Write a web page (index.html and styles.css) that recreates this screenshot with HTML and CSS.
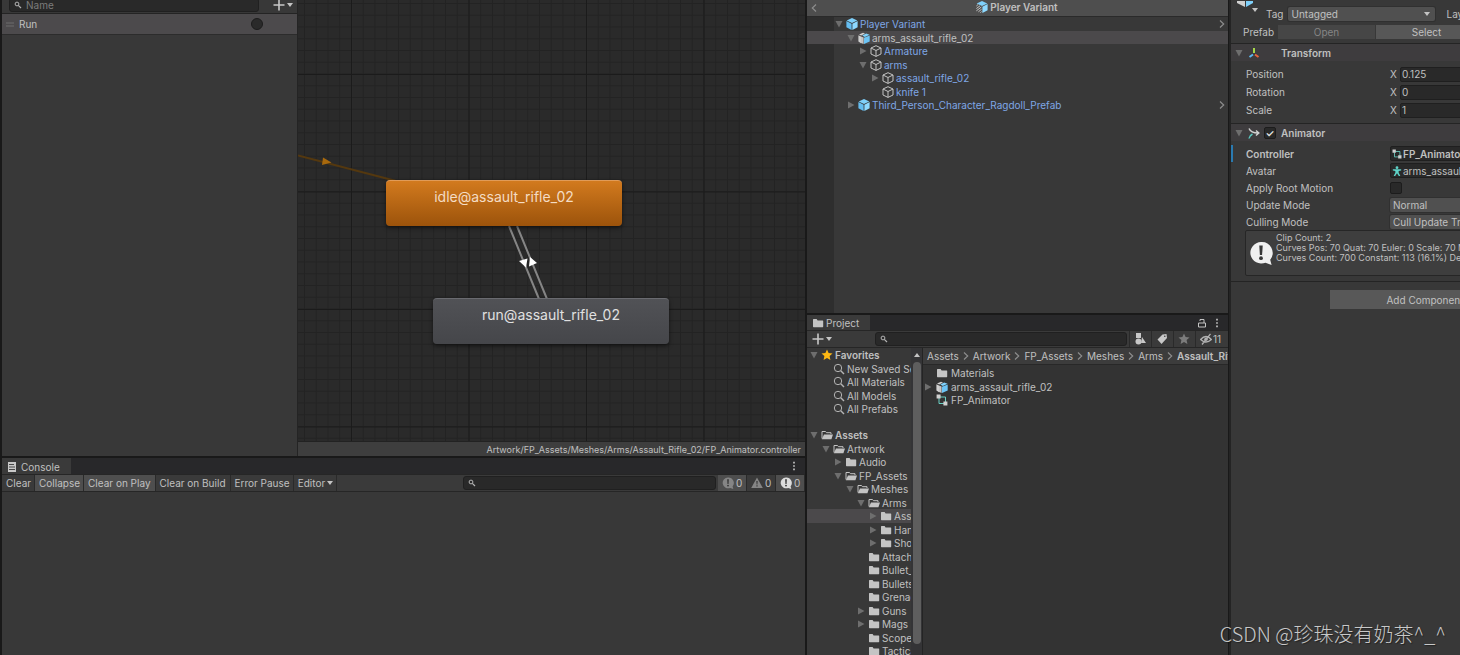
FILE: index.html
```html
<!DOCTYPE html>
<html lang="en">
<head>
<meta charset="utf-8">
<title>Animator</title>
<link rel="stylesheet" href="styles.css">
</head>
<body>
<svg class="defs" aria-hidden="true">
  <symbol id="i-cube" viewBox="0 0 12 12"><path fill="#7fd0fa" d="M6 0 11.3 2.4 6 5 .7 2.4Z"/><path fill="#64bdf0" d="M.4 3.1 5.6 5.7V12L.4 9.2Z"/><path fill="#8ed9ff" d="M11.6 3.1 6.4 5.7V12l5.2-2.8Z"/></symbol>
  <symbol id="i-variant" viewBox="0 0 12 12"><path fill="#7fd0fa" d="M6 0 11.3 2.4 6 5 .7 2.4Z"/><path stroke="#c4c4c4" d="M.4 5 2.2 3.4M.4 7.5 4 4.8M.4 9.8 5.4 6M2.4 10.8 5.6 8.2M4.4 11.6 5.6 10.6"/><path fill="#8ed9ff" d="M11.6 3.1 6.4 5.7V12l5.2-2.8Z"/></symbol>
  <symbol id="i-model" viewBox="0 0 12 12"><path fill="#d0d0d0" d="M.4 3.3 3 4.4v6.8L.4 9.4ZM1 2.6 5 .8l2 .8L3.2 3.5Z"/><path fill="#c4c4c4" d="m3 4.600 2.600 1V12L3 11Z"/><path fill="#7fd0fa" d="m4.2 3.600 4-2 3.400 1.200-4.800 2.200Z"/><path fill="#6cc4f5" d="m6 5.800 5.700-2.300v6.100L6 12Z"/></symbol>
  <symbol id="i-object" viewBox="0 0 12 12"><path fill="none" stroke="#c4c4c4" stroke-linejoin="round" d="M6 .7 11 3v6L6 11.4 1 9V3ZM1 3l5 2.5L11 3M6 5.5v5.9"/></symbol>
  <symbol id="i-folder" viewBox="0 0 12 12"><path fill="#c4c4c4" d="M1 2.6Q1 2 1.6 2h3l1 1.4h5q.6 0 .6.6v5.6q0 .6-.6.6h-9Q1 10.200 1 9.600Z"/></symbol>
  <symbol id="i-open" viewBox="0 0 12 12"><path fill="none" stroke="#c4c4c4" d="M1 9.500V2.500h3.500l1 1.200h4.500v1.300"/><path fill="#c4c4c4" d="M3 5.500h9L10.400 10.200H.8Z"/></symbol>
  <symbol id="i-search" viewBox="0 0 12 12"><circle cx="5" cy="5" r="3.700" fill="none" stroke="#b4b4b4"/><path stroke="#b4b4b4" stroke-width="1.400" d="m7.800 7.800 3.200 3.200"/></symbol>
  <symbol id="i-lens" viewBox="0 0 8 8"><circle cx="3" cy="3" r="1.900" fill="none" stroke="#b4b4b4"/><path stroke="#b4b4b4" stroke-width="1.200" d="m4.300 4.300 2.700 2.700"/></symbol>
  <symbol id="i-star" viewBox="0 0 12 12"><path d="m6 .6 1.600 3.500 3.900.4-2.900 2.600.8 3.900L6 9.100 2.600 11l.8-3.900L.5 4.500l3.900-.4Z"/></symbol>
  <symbol id="i-down" viewBox="0 0 10 10"><path d="M1.500 2h7L5 8.500Z"/></symbol>
  <symbol id="i-right" viewBox="0 0 10 10"><path d="M2 1.500v7L8.500 5Z"/></symbol>
  <symbol id="i-caret" viewBox="0 0 6 4"><path fill="#c4c4c4" d="M0 0h6L3 4Z"/></symbol>
  <symbol id="i-plus" viewBox="0 0 12 12"><path stroke="#c8c8c8" stroke-width="1.600" d="M6 .5v11M.5 6h11"/></symbol>
  <symbol id="i-next" viewBox="0 0 6 10"><path fill="none" stroke="currentColor" stroke-width="1.200" d="m1 1.500 3.700 3.500L1 8.500"/></symbol>
  <symbol id="i-dots" viewBox="0 0 4 12"><path fill="#c4c4c4" d="M1 1h2v2H1zM1 5h2v2H1zM1 9h2v2H1z"/></symbol>
  <symbol id="i-ctrl" viewBox="0 0 12 12"><path fill="none" stroke="#6ad0c4" d="M4 3h5.500v5M3 4v5.500h5"/><path fill="#d0d0d0" d="M.6.6h4v4h-4zM7.400 7.400h4v4h-4z"/></symbol>
  <symbol id="i-bubble" viewBox="0 0 24 24"><path fill="currentColor" d="M12 1a11 10.800 0 1 0 4.500 20.800L22.600 24l-1.400-5.300A10.900 10.900 0 0 0 12 1Z"/><path fill="#383838" d="M10.300 4.500h3.400l-.6 9.500h-2.200z"/><circle cx="12" cy="17.200" r="1.900" fill="#383838"/></symbol>
</svg>

<main class="editor">
  <div class="column column-left">
    <section class="animator">
      <div class="params">
        <div class="params-bar">
          <label class="search"><svg class="s8"><use href="#i-lens"/></svg><input type="text" placeholder="Name" aria-label="Parameter name"></label>
          <button class="add" aria-label="Add parameter"><svg class="s12"><use href="#i-plus"/></svg><svg class="caret"><use href="#i-caret"/></svg></button>
        </div>
        <div class="param"><svg class="grip" viewBox="0 0 8 5"><path stroke="#6c6c6c" d="M0 1h8M0 4h8"/></svg><label for="run">Run</label><input id="run" type="radio"></div>
      </div>
      <div class="graph">
        <div class="canvas">
          <svg class="wires">
            <defs>
              <pattern id="minor" x="6" y="3" width="11.75" height="11.75" patternUnits="userSpaceOnUse"><path stroke="#232323" fill="none" d="M.5 0v11.750M0 .5h11.750"/></pattern>
              <pattern id="major" x="53" y="74" width="117.500" height="117.500" patternUnits="userSpaceOnUse"><path stroke="#1b1b1b" fill="none" d="M.5 0v117.500M0 .5h117.500"/></pattern>
            </defs>
            <rect width="100%" height="100%" fill="url(#minor)"/>
            <rect width="100%" height="100%" fill="url(#major)"/>
            <path stroke="#54380f" stroke-width="2" d="M0 155.500 100 181.500"/>
            <path fill="#a8690d" d="m24 165 1-7.500 8.500 5z"/>
            <path stroke="#858585" stroke-width="2" d="m211 226 30 73M219 226l30 73"/>
            <path fill="#fff" d="m221 261 8.500-2.500L228 267.500zM231 266.500l1-9.500 7 6z"/>
          </svg>
          <button class="node idle">idle@assault_rifle_02</button>
          <button class="node run">run@assault_rifle_02</button>
        </div>
        <div class="path">Artwork/FP_Assets/Meshes/Arms/Assault_Rifle_02/FP_Animator.controller</div>
      </div>
    </section>

    <section class="console">
      <div class="tabs">
        <div class="tab"><svg class="doc" viewBox="0 0 10 10"><path fill="#c8c8c8" d="M1 0h8v10H1z"/><path stroke="#484848" d="M2 2.500h5M2 5h6M2 7.500h6"/></svg>Console</div>
        <button class="more" aria-label="Console menu"><svg class="dots"><use href="#i-dots"/></svg></button>
      </div>
      <div class="toolbar">
        <button>Clear</button><button class="on">Collapse</button><button class="on wide">Clear on Play</button><button class="wide">Clear on Build</button><button>Error Pause</button><button>Editor<svg class="caret"><use href="#i-caret"/></svg></button>
        <label class="search"><svg class="s8"><use href="#i-lens"/></svg><input type="text" aria-label="Search console"></label>
        <button class="count on dim"><svg class="s12"><use href="#i-bubble"/></svg>0</button>
        <button class="count dim"><svg class="s12" viewBox="0 0 12 12"><path fill="currentColor" d="M6 .5 11.800 11H.2Z"/><path fill="#383838" d="M5.300 4h1.400l-.3 3.600h-.8zM5.400 8.300h1.200v1.200H5.400z"/></svg>0</button>
        <button class="count on"><svg class="s12"><use href="#i-bubble"/></svg>0</button>
      </div>
    </section>
  </div>

  <div class="column column-mid">
    <section class="hierarchy">
      <header><button aria-label="Back"><svg class="next back"><use href="#i-next"/></svg></button><h2><svg class="s12"><use href="#i-variant"/></svg>Player Variant</h2></header>
      <ul class="tree">
        <li class="l0"><svg class="arrow"><use href="#i-down"/></svg><svg class="s12"><use href="#i-cube"/></svg><a href="#">Player Variant</a><svg class="next"><use href="#i-next"/></svg></li>
        <li class="l1 selected"><svg class="arrow"><use href="#i-down"/></svg><svg class="s12"><use href="#i-model"/></svg><span>arms_assault_rifle_02</span></li>
        <li class="l2"><svg class="arrow"><use href="#i-right"/></svg><svg class="s12"><use href="#i-object"/></svg><a href="#">Armature</a></li>
        <li class="l2"><svg class="arrow"><use href="#i-down"/></svg><svg class="s12"><use href="#i-object"/></svg><a href="#">arms</a></li>
        <li class="l3"><svg class="arrow"><use href="#i-right"/></svg><svg class="s12"><use href="#i-object"/></svg><a href="#">assault_rifle_02</a></li>
        <li class="l3"><svg class="arrow"></svg><svg class="s12"><use href="#i-object"/></svg><a href="#">knife 1</a></li>
        <li class="l1"><svg class="arrow"><use href="#i-right"/></svg><svg class="s12"><use href="#i-cube"/></svg><a href="#">Third_Person_Character_Ragdoll_Prefab</a><svg class="next"><use href="#i-next"/></svg></li>
      </ul>
    </section>

    <section class="project">
      <div class="tabs">
        <div class="tab"><svg class="s12"><use href="#i-folder"/></svg>Project</div>
        <button class="more" aria-label="Lock"><svg class="lock" viewBox="0 0 8 10"><path fill="none" stroke="#c4c4c4" d="M.5 5h7v4h-7zM2 3V1.500h4V5"/></svg></button>
        <button class="more" aria-label="Project menu"><svg class="dots"><use href="#i-dots"/></svg></button>
      </div>
      <div class="toolbar">
        <button class="add" aria-label="Create"><svg class="s12"><use href="#i-plus"/></svg><svg class="caret"><use href="#i-caret"/></svg></button>
        <label class="search"><svg class="s8"><use href="#i-lens"/></svg><input type="text" aria-label="Search project"></label>
        <button class="filter" aria-label="Search by type"><svg class="s12" viewBox="0 0 12 12"><path fill="#c8c8c8" d="M2 0h5v5H2zM8 4l4 6H7z"/><circle cx="4.500" cy="8.500" r="3" fill="#c8c8c8"/></svg></button>
        <button class="filter" aria-label="Search by label"><svg class="s12" viewBox="0 0 12 12"><path fill="#c8c8c8" d="m1.500 6.500 5-5 4-.5.500 4-5.500 6Z"/><circle cx="8.800" cy="3.200" r=".8" fill="#383838"/></svg></button>
        <button class="filter" aria-label="Save search"><svg class="s12 grey"><use href="#i-star"/></svg></button>
        <button class="hidden-count"><svg class="s12" viewBox="0 0 12 12"><path fill="none" stroke="#b0b0b0" stroke-width="1.300" d="M.6 6.500Q6 .5 11.400 6.500 6 11.500.6 6.500ZM2 11.500 10.500.8"/><circle cx="6" cy="6.200" r="1.700" fill="#b0b0b0"/></svg>11</button>
      </div>
      <div class="browser">
        <ul class="tree folders">
          <li class="l0"><svg class="arrow"><use href="#i-down"/></svg><svg class="s12 gold"><use href="#i-star"/></svg><b>Favorites</b></li>
          <li class="l1 leaf"><svg class="s12"><use href="#i-search"/></svg><span>New Saved Search</span></li>
          <li class="l1 leaf"><svg class="s12"><use href="#i-search"/></svg><span>All Materials</span></li>
          <li class="l1 leaf"><svg class="s12"><use href="#i-search"/></svg><span>All Models</span></li>
          <li class="l1 leaf"><svg class="s12"><use href="#i-search"/></svg><span>All Prefabs</span></li>
          <li class="spacer"></li>
          <li class="l0"><svg class="arrow"><use href="#i-down"/></svg><svg class="s12"><use href="#i-open"/></svg><b>Assets</b></li>
          <li class="l1"><svg class="arrow"><use href="#i-down"/></svg><svg class="s12"><use href="#i-open"/></svg><span>Artwork</span></li>
          <li class="l2"><svg class="arrow"><use href="#i-right"/></svg><svg class="s12"><use href="#i-folder"/></svg><span>Audio</span></li>
          <li class="l2"><svg class="arrow"><use href="#i-down"/></svg><svg class="s12"><use href="#i-open"/></svg><span>FP_Assets</span></li>
          <li class="l3"><svg class="arrow"><use href="#i-down"/></svg><svg class="s12"><use href="#i-open"/></svg><span>Meshes</span></li>
          <li class="l4"><svg class="arrow"><use href="#i-down"/></svg><svg class="s12"><use href="#i-open"/></svg><span>Arms</span></li>
          <li class="l5 selected"><svg class="arrow"><use href="#i-right"/></svg><svg class="s12"><use href="#i-folder"/></svg><span>Assault_Rifle_02</span></li>
          <li class="l5"><svg class="arrow"><use href="#i-right"/></svg><svg class="s12"><use href="#i-folder"/></svg><span>Handgun</span></li>
          <li class="l5"><svg class="arrow"><use href="#i-right"/></svg><svg class="s12"><use href="#i-folder"/></svg><span>Shotgun</span></li>
          <li class="l4 leaf"><svg class="s12"><use href="#i-folder"/></svg><span>Attachments</span></li>
          <li class="l4 leaf"><svg class="s12"><use href="#i-folder"/></svg><span>Bullet_Casings</span></li>
          <li class="l4 leaf"><svg class="s12"><use href="#i-folder"/></svg><span>Bullets</span></li>
          <li class="l4 leaf"><svg class="s12"><use href="#i-folder"/></svg><span>Grenades</span></li>
          <li class="l4"><svg class="arrow"><use href="#i-right"/></svg><svg class="s12"><use href="#i-folder"/></svg><span>Guns</span></li>
          <li class="l4"><svg class="arrow"><use href="#i-right"/></svg><svg class="s12"><use href="#i-folder"/></svg><span>Mags</span></li>
          <li class="l4 leaf"><svg class="s12"><use href="#i-folder"/></svg><span>Scopes</span></li>
          <li class="l4 leaf"><svg class="s12"><use href="#i-folder"/></svg><span>Tactical</span></li>
        </ul>
        <div class="scrollbar"><svg class="caret up"><use href="#i-caret"/></svg><div class="thumb"></div></div>
        <div class="files">
          <nav class="crumbs"><a href="#">Assets</a><svg class="next"><use href="#i-next"/></svg><a href="#">Artwork</a><svg class="next"><use href="#i-next"/></svg><a href="#">FP_Assets</a><svg class="next"><use href="#i-next"/></svg><a href="#">Meshes</a><svg class="next"><use href="#i-next"/></svg><a href="#">Arms</a><svg class="next"><use href="#i-next"/></svg><b>Assault_Rifle_02</b></nav>
          <ul class="tree">
            <li><svg class="arrow"></svg><svg class="s12"><use href="#i-folder"/></svg><span>Materials</span></li>
            <li><svg class="arrow"><use href="#i-right"/></svg><svg class="s12"><use href="#i-model"/></svg><span>arms_assault_rifle_02</span></li>
            <li><svg class="arrow"></svg><svg class="s12"><use href="#i-ctrl"/></svg><span>FP_Animator</span></li>
          </ul>
        </div>
      </div>
    </section>
  </div>

  <aside class="inspector">
    <div class="sheet">
      <div class="object">
        <div class="tag-row">
          <div class="object-icon"><svg class="big-cube" viewBox="0 0 18 6"><path fill="#d0d0d0" d="M0 0h8v6L0 2z"/><path fill="#7fd0fa" d="M9 0h7v2L9 6z"/></svg><svg class="caret"><use href="#i-caret"/></svg></div>
          <label for="tag">Tag</label>
          <div class="picker"><select id="tag"><option>Untagged</option></select><svg class="caret"><use href="#i-caret"/></svg></div>
          <label for="layer">Layer</label><select id="layer" class="layer"><option></option></select>
        </div>
        <div class="prefab-row"><span>Prefab</span><button disabled>Open</button><button>Select</button></div>
      </div>
      <div class="component">
        <h3><svg class="arrow"><use href="#i-down"/></svg><svg class="s12" viewBox="0 0 12 12"><path stroke="#a6d84a" stroke-width="2" d="M6 1v5"/><path stroke="#5cb8f0" stroke-width="2" d="M5 7.500 1.500 10"/><path stroke="#e8643c" stroke-width="2" d="m7 7.500 3.500 2.500"/></svg><span class="no-toggle"></span>Transform</h3>
        <div class="fields">
          <div class="field"><label for="px">Position</label><i>X</i><input id="px" type="text" value="0.125"></div>
          <div class="field"><label for="rx">Rotation</label><i>X</i><input id="rx" type="text" value="0"></div>
          <div class="field"><label for="sx">Scale</label><i>X</i><input id="sx" type="text" value="1"></div>
        </div>
      </div>
      <div class="component">
        <h3><svg class="arrow"><use href="#i-down"/></svg><svg class="s12" viewBox="0 0 12 12"><path fill="none" stroke="#d0d0d0" stroke-width="1.500" d="M1 1.500Q3 6 10 6M8 3.500 10.800 6 8 8.500"/><path stroke="#5ac8c0" stroke-width="1.500" d="M1 11.500Q1.500 8.500 4.500 7" fill="none"/></svg><input type="checkbox" checked aria-label="Animator enabled"><span>Animator</span></h3>
        <div class="fields animator-fields">
          <div class="field changed"><label for="ctl">Controller</label><button id="ctl" class="ref"><svg class="s10"><use href="#i-ctrl"/></svg>FP_Animator</button></div>
          <div class="field"><label for="ava">Avatar</label><button id="ava" class="ref"><svg class="s10" viewBox="0 0 12 12"><circle cx="6" cy="2" r="1.700" fill="#5fd3c8"/><path fill="#5fd3c8" d="M1 4h10v1.300L8 6v2l2 4H8.200L6 8.800 3.800 12H2l2-4V6L1 5.300z"/></svg>arms_assault_rifle_02Avatar</button></div>
          <div class="field"><label for="arm">Apply Root Motion</label><input id="arm" type="checkbox"></div>
          <div class="field"><label for="upd">Update Mode</label><select id="upd"><option>Normal</option></select></div>
          <div class="field"><label for="cul">Culling Mode</label><select id="cul"><option>Cull Update Transforms</option></select></div>
        </div>
        <div class="info"><svg class="s24"><use href="#i-bubble"/></svg><p>Clip Count: 2<br>Curves Pos: 70 Quat: 70 Euler: 0 Scale: 70 Muscles: 0<br>Curves Count: 700 Constant: 113 (16.1%) Dense: 587</p></div>
      </div>
      <div class="footer"><button class="add-component">Add Component</button></div>
    </div>
  </aside>
</main>
<div class="watermark" lang="zh">CSDN @珍珠没有奶茶^_^</div>
</body>
</html>
```
FILE: styles.css
```css
* { box-sizing: border-box; }
body { margin: 0; background: #191919; color: #c0c0c0; font: 10px/14px Inter, "Noto Sans", sans-serif; overflow: hidden; }
button, input, select { font: inherit; color: inherit; margin: 0; padding: 0; border: 0; background: none; min-width: 0; }
button { white-space: nowrap; }
ul { list-style: none; margin: 0; padding: 0; }
a { color: inherit; text-decoration: none; }
h2, h3, p { margin: 0; font-size: inherit; }
svg { flex: none; display: block; }
b { font-weight: 600; }
.defs { position: absolute; width: 0; height: 0; }
.s8 { width: 8px; height: 8px; }
.s10 { width: 10px; height: 10px; }
.s12 { width: 12px; height: 12px; }
.s24 { width: 24px; height: 24px; }
.arrow { width: 10px; height: 10px; fill: #6e6e6e; }
.caret { width: 6px; height: 4px; }
.dots { width: 4px; height: 10px; }
.next { width: 6px; height: 10px; color: #8c8c8c; }
.back { transform: rotate(180deg); }
.gold { fill: #fdb813; }
.grey { fill: #7c7c7c; }

.editor { display: grid; grid-template-columns: 805fr 424fr 231fr; height: 100vh; }
.column { display: grid; min-width: 0; min-height: 0; gap: 2px; }
.column-left { grid-template-rows: 456fr 197fr; padding-left: 2px; }
.column-mid { grid-template-rows: 313fr 340fr; padding: 0 1px 0 2px; }
section { min-width: 0; min-height: 0; overflow: hidden; background: #383838; }

.search { display: flex; align-items: center; gap: 4px; height: 14px; padding-left: 4px; background: #292929; border: 1px solid #202020; border-radius: 3px; }
.search input { flex: 1; outline: 0; }
.search input::placeholder { color: #7c7c7c; }
.add { display: flex; align-items: center; gap: 2px; }
.tabs { display: flex; align-items: stretch; height: 16px; background: #28282a; }
.tab { display: flex; align-items: center; gap: 2px; padding: 1px 11px 0 5px; margin-right: auto; background: #3a3a3a; }
.more { padding: 0 5px 0 4px; }
.more:last-child { padding-right: 9px; }
.toolbar { display: flex; align-items: stretch; height: 18px; border-bottom: 1px solid #262626; border-top: 1px solid #262626; background: #3a3a3a; }

.animator { display: flex; }
.params { width: 296px; border-right: 1px solid #242424; }
.params-bar { display: flex; align-items: center; height: 14px; padding: 0 4px 4px 7px; border-bottom: 1px solid #242424; }
.params-bar .search { flex: 1; margin-right: 14px; }
.param { display: flex; align-items: center; height: 21px; padding: 0 34px 0 4px; background: #4c4a4c; border-bottom: 1px solid #2c2c2c; }
.grip { width: 8px; height: 5px; }
.param label { margin: 0 auto 0 5px; }
.param input { appearance: none; width: 12px; height: 12px; border: 1px solid #1c1c1c; border-radius: 50%; background: #2a2a2a; }
.graph { flex: 1; min-width: 0; display: flex; flex-direction: column; }
.canvas { position: relative; flex: 1; overflow: hidden; background: #2a2a2a; }
.wires { position: absolute; inset: 0; width: 100%; height: 100%; }
.node { position: absolute; width: 236px; height: 46px; padding-bottom: 13px; border-radius: 4px; font-size: 14px; box-shadow: 0 2px 4px #0008; }
.idle { left: 88px; top: 180px; color: #f4dcc4; background: linear-gradient(#d27a1e, #9c530b); border-top: 1px solid #e09b58; }
.run { left: 135px; top: 298px; color: #e0e0e0; background: linear-gradient(#515256, #45464a); border-top: 1px solid #6a6b70; }
.path { height: 15px; padding-right: 4px; border-top: 1px solid #222; background: #3e3e3e; text-align: right; font-size: 9px; line-height: 15px; }

.doc { width: 10px; height: 10px; margin-right: 2px; }
.console .toolbar button { padding: 0 3px 0 4px; border-right: 1px solid #2a2a2a; display: flex; align-items: center; gap: 2px; }
.console .toolbar .wide { padding-right: 4px; }
.console .toolbar .count { min-width: 29px; }
.toolbar .on { background: #4e4e4e; }
.toolbar .search { flex: 1; max-width: 253px; margin: 1px 2px 0 auto; }
.count svg { color: #dcdcdc; }
.dim svg { color: #858585; }

.hierarchy header { display: flex; height: 17px; padding: 0 11px 0 4px; background: #4e4e4e; border-bottom: 1px solid #2a2a2a; }
.hierarchy h2 { flex: 1; display: flex; align-items: center; justify-content: center; gap: 2px; padding-bottom: 2px; font-weight: 600; }
.hierarchy { background: linear-gradient(90deg, #2e2e2e 27px, #383838 27px); }
.tree li { display: flex; align-items: center; gap: 2px; height: 14px; white-space: nowrap; }
.tree li:nth-child(even) { height: 13px; }
.tree .selected { background: #4b494b; }
.hierarchy li { padding-right: 3px; }
.hierarchy .tree a { color: #7fa7e6; }
.hierarchy .tree .next { margin-left: auto; }
.hierarchy .l0 { padding-left: 27px; }
.hierarchy .l1 { padding-left: 39px; }
.hierarchy .l2 { padding-left: 51px; }
.hierarchy .l3 { padding-left: 63px; }

.project { display: flex; flex-direction: column; }
.project .tabs { height: 15px; }
.project .toolbar { padding-left: 5px; }
.project .toolbar .search { max-width: none; margin-left: 43px; }
.filter { width: 22px; padding-left: 4px; border-left: 1px solid #2a2a2a; }
.hidden-count { width: 33px; display: flex; align-items: center; gap: 1px; padding-left: 4px; border-left: 1px solid #2a2a2a; }
.lock { width: 8px; height: 10px; }
.browser { flex: 1; min-height: 0; display: flex; }
.folders { width: 104px; overflow: hidden; }
.folders li.spacer:nth-child(even) { height: 12px; }
.folders .l0 { padding-left: 2px; }
.folders .l1 { padding-left: 14px; }
.folders .l2 { padding-left: 26px; }
.folders .l3 { padding-left: 38px; }
.folders .l4 { padding-left: 49px; }
.folders .l5 { padding-left: 61px; }
.folders .leaf .s12 { margin-left: 12px; }
.scrollbar { width: 12px; padding: 5px 2px 11px; display: flex; flex-direction: column; align-items: center; gap: 5px; border-right: 1px solid #242424; background: #343436; }
.up { transform: rotate(180deg); }
.thumb { flex: 1; width: 8px; border-radius: 4px; background: #5e5e5e; }
.files { flex: 1; min-width: 0; background: #333; }
.crumbs { display: flex; align-items: center; gap: 4px; height: 17px; padding-left: 4px; overflow: hidden; white-space: nowrap; background: #3c3c3c; border-bottom: 1px solid #282828; }
.files .tree { padding-top: 1px; }
.files .tree li { gap: 3px; }

.inspector { min-width: 0; overflow: hidden; background: #383838; border-left: 2px solid #242424; }
.sheet { min-width: 388px; }
select { appearance: none; height: 14px; padding: 0 3px; border-radius: 2px; background: #505050; box-shadow: 0 0 0 1px #303030; line-height: 14px; }
.object { border-bottom: 1px solid #242424; }
.tag-row { display: flex; align-items: center; height: 23px; padding: 5px 0 0 6px; }
.object-icon { width: 29px; height: 18px; display: flex; flex-direction: column; gap: 1px; margin-top: -9px; }
.object-icon .caret { margin-left: 15px; }
.big-cube { width: 18px; height: 6px; }
.picker { position: relative; width: 147px; margin: 0 11px 0 5px; display: flex; }
.picker select { flex: 1; }
.picker .caret { position: absolute; right: 5px; top: 5px; }
.layer { flex: 1; margin-left: 5px; }
.prefab-row { display: flex; align-items: center; height: 20px; padding: 0 0 2px 12px; }
.prefab-row span { width: 35px; }
.prefab-row button { width: 97px; height: 14px; margin-right: 1px; background: #575757; }
.prefab-row button:last-child { width: 101px; }
.prefab-row button:disabled { background: #464646; color: #858585; }
.component { border-bottom: 1px solid #242424; }
h3 { display: flex; align-items: center; gap: 4px; height: 17px; padding-left: 3px; background: #3e3c3e; font-weight: 600; }
.no-toggle { width: 13px; }
h3 input { margin-right: 1px; }
.fields { padding: 4px 0; }
.animator-fields { padding-bottom: 0; }
.field { display: flex; align-items: center; height: 18px; padding-left: 15px; }
.field label { width: 144px; }
.field i { width: 10px; font-style: normal; }
.field input[type="text"] { height: 15px; flex: 1; padding-left: 1px; background: #292929; border: 1px solid #1f1f1f; border-radius: 2px; }
.animator-fields .field { height: 17px; }
.field select, .ref { flex: 1; }
.field .ref { height: 15px; display: flex; align-items: center; gap: 1px; padding-left: 1px; border: 1px solid #1f1f1f; border-radius: 2px; background: #292929; }
.changed { font-weight: 600; border-left: 2px solid #2a7ab0; }
.animator-fields .changed { padding-left: 13px; }
input[type="checkbox"] { appearance: none; width: 12px; height: 12px; background: #292929; border: 1px solid #1c1c1c; border-radius: 2px; line-height: 10px; text-align: center; }
input[type="checkbox"]:checked::after { content: "✓"; color: #e8e8e8; display: block; }
.info { display: flex; gap: 3px; margin: 0 4px 5px 14px; height: 46px; padding: 2px 3px; background: #3e3e3e; border: 1px solid #262626; border-radius: 2px; }
.info svg { color: #f0f0f0; margin-top: 8px; }
.info p { font-size: 9px; line-height: 10px; white-space: nowrap; }
.footer { padding: 8px; text-align: center; }
.add-component { width: 190px; height: 19px; background: #585858; }
.watermark { position: absolute; right: 14px; bottom: 7px; font: 300 20px/28px "Noto Sans CJK SC", sans-serif; color: #c8c8c8; text-shadow: 1px 1px 1px #0006; }
```
